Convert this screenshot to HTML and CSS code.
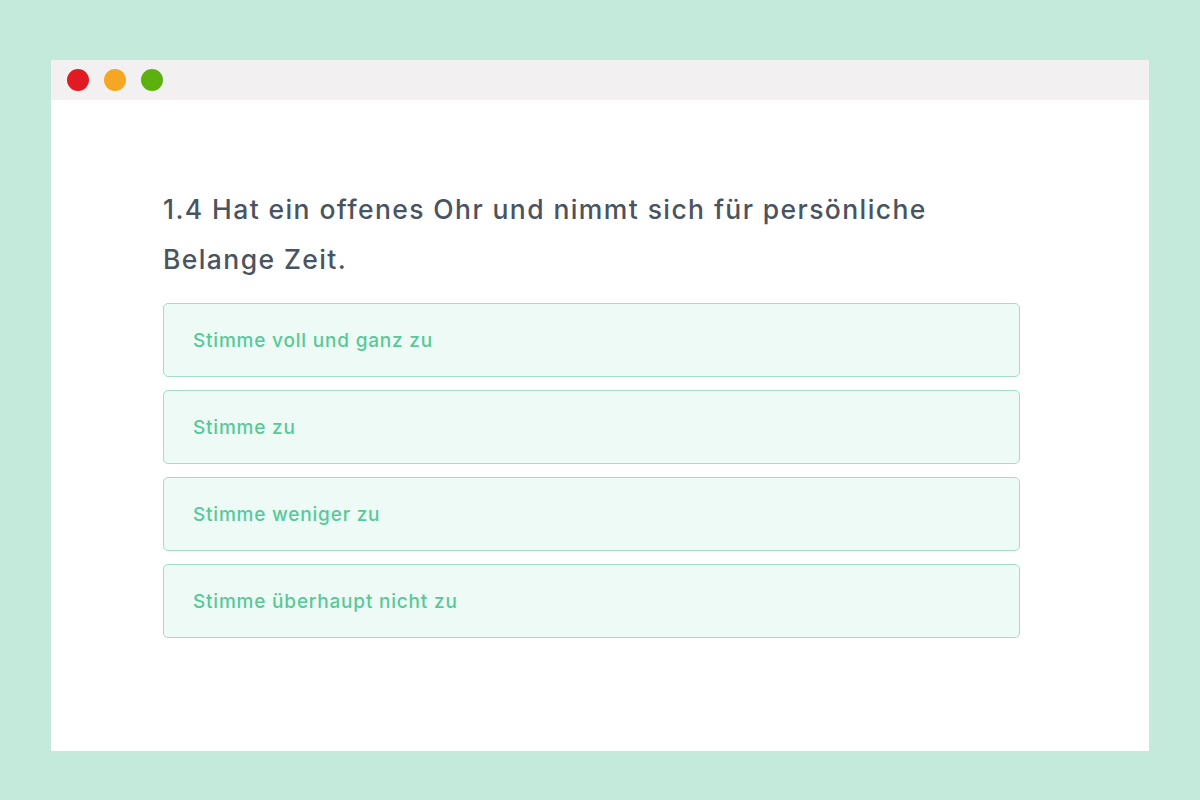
FILE: index.html
```html
<!DOCTYPE html>
<html lang="de">
<head>
  <meta charset="UTF-8">
  <title>Umfrage</title>
  <link rel="stylesheet" href="styles.css">
</head>
<body>
  <!-- Browserfenster -->
  <div class="window">
    <div class="titlebar">
      <span class="dot red"></span>
      <span class="dot orange"></span>
      <span class="dot green"></span>
    </div>

    <div class="content">
      <h2 class="question">1.4 Hat ein offenes Ohr und nimmt sich für persönliche Belange Zeit.</h2>
      <div class="options">
        <div class="option">Stimme voll und ganz zu</div>
        <div class="option">Stimme zu</div>
        <div class="option">Stimme weniger zu</div>
        <div class="option">Stimme überhaupt nicht zu</div>
      </div>
    </div>
  </div>
</body>
</html>
```

FILE: styles.css
```css
/* Grundlayout */
body {
  margin: 0;
  padding: 60px 51px 49px;
  background-color: #c4eadc;
  font-family: 'Inter', sans-serif;
}

.window {
  background-color: #ffffff;
  height: 691px;
}

/* Fensterleiste */
.titlebar {
  height: 40px;
  background-color: #f2f0f0;
  display: flex;
  align-items: center;
  gap: 15px;
  padding-left: 16px;
}

.dot {
  width: 22px;
  height: 22px;
  border-radius: 50%;
}

.dot.red { background-color: #e01b24; }
.dot.orange { background-color: #f5a623; }
.dot.green { background-color: #5db10f; }

/* Inhalt */
.content {
  padding: 84px 0 0 112px;
  width: 857px;
}

.question {
  margin: 0 0 19px;
  font-size: 26.5px;
  font-weight: 500;
  line-height: 50px;
  letter-spacing: 1.4px;
  color: #4a5461;
  max-width: 800px;
}

.options {
  display: flex;
  flex-direction: column;
  gap: 13px;
}

.option {
  height: 74px;
  box-sizing: border-box;
  display: flex;
  align-items: center;
  padding-left: 29px;
  border: 1px solid #a2dec5;
  border-radius: 5px;
  background-color: #eefaf5;
  color: #57c998;
  font-size: 19px;
  font-weight: 500;
  letter-spacing: 0.8px;
}
```
